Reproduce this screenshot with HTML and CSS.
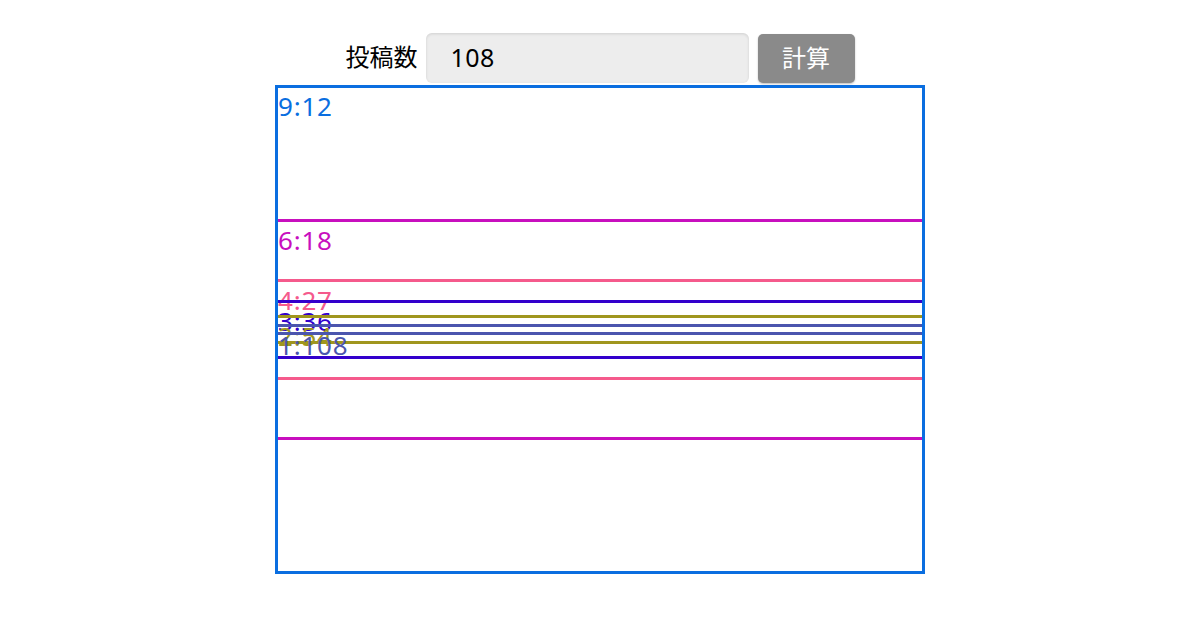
FILE: index.html
```html
<!DOCTYPE html>
<html lang="ja">
<head>
<meta charset="utf-8">
<title>投稿数</title>
<link rel="stylesheet" href="styles.css">
</head>
<body>
<main class="page">
  <form class="controls">
    <label class="count-label" for="count">投稿数</label>
    <input id="count" class="count-input" type="text" value="108">
    <button type="button" class="calc-btn">計算</button>
  </form>
  <div class="diagram">
    <div class="box box-outer c1" style="height:483px">
      <span class="label">9:12</span>
      <div class="box c2" style="height:214.667px">
        <span class="label">6:18</span>
        <div class="box c3" style="height:95.407px">
          <span class="label">4:27</span>
          <div class="box c4" style="height:53.667px">
            <span class="label">3:36</span>
            <div class="box c5" style="height:23.852px">
              <span class="label">2:54</span>
              <div class="box c6" style="height:5.963px">
                <span class="label">1:108</span>
              </div>
            </div>
          </div>
        </div>
      </div>
    </div>
  </div>
</main>
</body>
</html>
```

FILE: styles.css
```css
html, body {
  margin: 0;
  padding: 0;
  background: #ffffff;
}

body {
  font-family: "Noto Sans CJK JP", "Noto Sans", sans-serif;
  color: #000;
}

.page {
  display: flex;
  flex-direction: column;
  align-items: center;
  padding-top: 33px;
}

.controls {
  display: flex;
  align-items: center;
  gap: 8px;
  margin: 0;
}

.count-label {
  font-size: 24px;
  line-height: 46px;
  padding-bottom: 4px;
}

.count-input {
  box-sizing: border-box;
  width: 323px;
  height: 50px;
  border: none;
  border-radius: 6px;
  background: #ededed;
  box-shadow: inset 0 1px 3px rgba(0, 0, 0, 0.12);
  padding: 0 0 3px 25px;
  font-family: "Noto Sans", "Noto Sans CJK JP", sans-serif;
  font-size: 25px;
  letter-spacing: 0.5px;
  color: #000;
  outline: none;
}

.calc-btn {
  box-sizing: border-box;
  width: 97px;
  height: 49px;
  margin-left: 1px;
  border: none;
  border-radius: 5px;
  background: #8a8a8a;
  box-shadow: 0 1px 2px rgba(0, 0, 0, 0.25);
  color: #ffffff;
  font-family: "Noto Sans CJK JP", "Noto Sans", sans-serif;
  font-size: 24px;
  padding: 0 0 3px 0;
}

.diagram {
  margin-top: 2px;
}

.box {
  position: relative;
  display: flex;
  align-items: center;
  box-sizing: content-box;
  width: 100%;
  flex: none;
  border-top: 3px solid;
  border-bottom: 3px solid;
}

.box-outer {
  width: 644px;
  border: 3px solid;
}

.label {
  position: absolute;
  top: 0;
  left: 0;
  font-family: "Noto Sans", "Noto Sans CJK JP", sans-serif;
  font-size: 26px;
  letter-spacing: 0.8px;
  line-height: 36px;
  white-space: nowrap;
}

.c1 { border-color: #0a6ee0; }
.c1 > .label { color: #0a6ee0; }
.c2 { border-color: #c80fbe; }
.c2 > .label { color: #c80fbe; }
.c3 { border-color: #f55a8c; }
.c3 > .label { color: #f55a8c; }
.c4 { border-color: #3300cc; }
.c4 > .label { color: #3300cc; }
.c5 { border-color: #a0961e; }
.c5 > .label { color: #a0961e; }
.c6 { border-color: #4b55ae; }
.c6 > .label { color: #4b55ae; }
```
